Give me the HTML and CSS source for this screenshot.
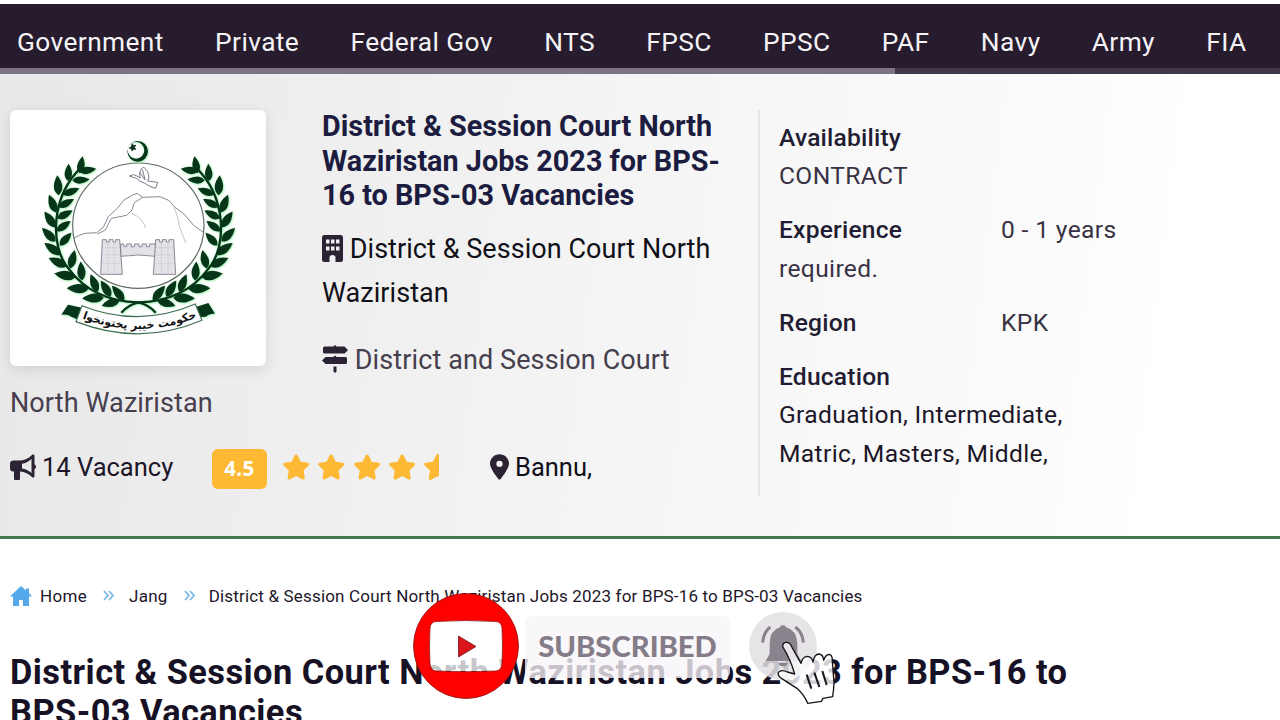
FILE: index.html
```html
<!DOCTYPE html>
<html lang="en">
<head>
    <meta charset="UTF-8">
    <meta name="viewport" content="width=device-width, initial-scale=1.0">
    <title>District &amp; Session Court North Waziristan Jobs 2023</title>
    <link rel="stylesheet" href="styles.css">
</head>
<body>
    <nav class="navbar">
        <div class="nav-links">
            <a>Government</a>
            <a>Private</a>
            <a>Federal Gov</a>
            <a>NTS</a>
            <a>FPSC</a>
            <a>PPSC</a>
            <a>PAF</a>
            <a>Navy</a>
            <a>Army</a>
            <a>FIA</a>
        </div>
        <div class="nav-scroll"><div class="nav-thumb"></div></div>
    </nav>

    <section class="hero">
        <div class="job">
            <div class="job-top">
                <div class="logo-card">
                    <svg viewBox="30 30 768 768">
                        <defs>
                            <path id="leaf" d="M-25 0Q-8 -22 27 0Q-6 22 -25 0Z"/>
                            <g id="branch">
                                <path d="M246 200C150 290 150 440 205 505C260 580 340 605 415 607Q448 615 467 638" fill="none" stroke="#07351a" stroke-width="7"/>
                                <use href="#leaf" transform="translate(243 195) rotate(-80)"/>
                                <use href="#leaf" transform="translate(205 218) rotate(-88)"/>
                                <use href="#leaf" transform="translate(174 257) rotate(-94) scale(1.15)"/>
                                <use href="#leaf" transform="translate(158 312) rotate(-112) scale(1.1)"/>
                                <use href="#leaf" transform="translate(150 359) rotate(-124) scale(1.1)"/>
                                <use href="#leaf" transform="translate(147 405) rotate(-135) scale(1.1)"/>
                                <use href="#leaf" transform="translate(158 447) rotate(-144) scale(1.15)"/>
                                <use href="#leaf" transform="translate(174 487) rotate(-155) scale(1.15)"/>
                                <use href="#leaf" transform="translate(196 526) rotate(-170) scale(1.25)"/>
                                <use href="#leaf" transform="translate(234 566) rotate(-178) scale(1.25)"/>
                                <use href="#leaf" transform="translate(280 594) rotate(178) scale(1.25)"/>
                                <use href="#leaf" transform="translate(333 609) rotate(162) scale(1.1)"/>
                                <use href="#leaf" transform="translate(262 211) rotate(-10)"/>
                                <use href="#leaf" transform="translate(242 240) rotate(-4)"/>
                                <use href="#leaf" transform="translate(213 275) rotate(-22)"/>
                                <use href="#leaf" transform="translate(198 310) rotate(-28)"/>
                                <use href="#leaf" transform="translate(194 344) rotate(-28)"/>
                                <use href="#leaf" transform="translate(190 379) rotate(-36)"/>
                                <use href="#leaf" transform="translate(196 418) rotate(-48)"/>
                                <use href="#leaf" transform="translate(217 479) rotate(-76) scale(1.1)"/>
                                <use href="#leaf" transform="translate(244 514) rotate(-94) scale(1.1)"/>
                                <use href="#leaf" transform="translate(283 550) rotate(-112) scale(1.1)"/>
                                <use href="#leaf" transform="translate(318 567) rotate(-122) scale(1.1)"/>
                                <use href="#leaf" transform="translate(355 580) rotate(-130) scale(1.1)"/>
                            </g>
                        </defs>
                        <g class="wreath">
                            <use href="#branch"/>
                            <use href="#branch" transform="translate(831 0) scale(-1 1)"/>
                        </g>
                        <ellipse cx="415" cy="377" rx="197" ry="188" fill="#fff" stroke="#5d6b63" stroke-width="3.5"/>
                        <!-- crescent and star -->
                        <path class="wreath" fill-rule="evenodd" d="M413 123A31 31 0 1 1 413 185A31 31 0 1 1 413 123ZM408 126A25 25 0 1 0 408 176A25 25 0 1 0 408 126Z"/>
                        <path fill="#123322" stroke="#123322" stroke-width="3" d="M397 131l3 6 7-1-4 6 4 6-7-1-4 6-1-7-7-2 6-3z"/>
                        <!-- dove -->
                        <path d="M388 228l12-4q10 2 20 10q-4-26 11-33q16 12 16 30l-4 12l30 4l-6 18q-18-4-34-16q-18-6-24-14zM420 218l15 22M427 208l8 30" fill="none" stroke="#665f70" stroke-width="2.5"/>
                        <!-- mountain -->
                        <g fill="none" stroke="#8d8794" stroke-width="3">
                            <path d="M221 415L240 405L255 400L290 398L310 382L325 350L352 325L372 300L398 285L411 280L428 292L480 290L508 302L525 322L552 342L580 375L610 397"/>
                            <path d="M292 402L316 390L334 355L380 346L396 330L403 308L428 292" />
                            <path d="M395 341Q426 350 437 384M522 322Q535 350 538 378L557 429" stroke="#bbb7c0" stroke-width="2.5"/>
                        </g>
                        <!-- fort -->
                        <g fill="#e4e2e7" stroke="#777281" stroke-width="2.5">
                            <path d="M362 432h10v8h8v-8h14v8h9v-8h14v8h9v-8h14v8h9v-8h18v37q-50-8-105 0z"/>
                            <path d="M307 419h12v7h8v-7h12v7h8v-7h12l8 104h-65z"/>
                            <path d="M467 419h12v7h8v-7h12v7h8v-7h14l6 104h-67z"/>
                            <path d="M306 443h54M305 465h58M304 490h61M466 443h57M463 465h61M462 490h63M324 430v90M343 430v90M484 430v90M504 430v90" stroke="#b4b1ba" stroke-width="1.5" stroke-dasharray="6 4"/>
                        </g>
                        <!-- ribbon -->
                        <g class="wreath">
                            <path d="M184 644L204 614L245 623L231 658L214 650Q202 641 184 644Z"/>
                            <path d="M645 641L625 609L588 621L600 651L617 650Q628 640 645 641Z"/>
                        </g>
                        <path d="M246 617Q415 685 586 612L606 661Q420 740 228 665Z" fill="#fff" stroke="#3d7050" stroke-width="3.5"/>
                        <path id="ribbonLine" d="M245 655Q420 720 592 652" fill="none"/>
                        <text class="ribbon-text" text-anchor="middle"><textPath href="#ribbonLine" startOffset="50%">حکومت خیبر پختونخوا</textPath></text>
                    </svg>
                </div>
                <div class="job-info">
                    <h2>District &amp; Session Court North Waziristan Jobs 2023 for BPS-16 to BPS-03 Vacancies</h2>
                    <p class="company">
                        <svg class="ico-building" viewBox="0 0 21 27"><path fill-rule="evenodd" d="M2.5 0H18.5Q21 0 21 2.5V24.5Q21 27 18.5 27H13.5V22.5Q13.5 20 10.5 20T7.5 22.5V27H2.5Q0 27 0 24.5V2.5Q0 0 2.5 0ZM4 4.5v4h3.5v-4zM9 4.5v4h3.5v-4zM14 4.5v4h3.5v-4zM4 11.5v4h3.5v-4zM9 11.5v4h3.5v-4zM14 11.5v4h3.5v-4z"/></svg>
                        District &amp; Session Court North Waziristan
                    </p>
                    <p class="department">
                        <svg class="ico-sign" viewBox="0 0 26 28"><path d="M11.5 1.5Q13 -1 14.5 1.5H22.5L26 5L22.5 8.5H2.5Q1 8.5 1 7V3Q1 1.5 2.5 1.5ZM11.5 12Q13 9 14.5 12H23.5Q25 12 25 13.5V17.500Q25 19 23.5 19H3.5L0 15.5L3.5 12ZM11.500 21.500h3V26.500Q13 29 11.500 26.500Z"/></svg>
                        District and Session Court
                    </p>
                </div>
            </div>
            <p class="department-rest">North Waziristan</p>
            <div class="job-meta">
                <span class="vacancy">
                    <svg class="ico-horn" viewBox="0 0 26 26"><path fill-rule="evenodd" d="M24.5 1.5V10.500Q26 11 26 12.800T24.500 15V22.500Q24 24 22.500 23.500Q17 18 10 17.500V25Q10 26 9 26H5Q4 26 4 25V17.500H3Q0 17 0 14.500V9.500Q0 7 3 6.500H9Q17 6.500 22.500 .5Q24 0 24.500 1.500ZM21.500 5Q17 9.200 12 9.700V14.500Q17 15 21.500 19Z"/></svg>
                    14 Vacancy
                </span>
                <span class="score">4.5</span>
                <span class="stars">
                    <svg viewBox="0 0 576 512"><path id="star" d="M316.900 18C311.600 7 300.400 0 288.100 0s-23.400 7-28.800 18L195 150.300 51.400 171.500c-12 1.800-22 10.200-25.700 21.700s-.7 24.200 7.900 32.700L137.800 329 113.200 474.700c-2 12 3 24.200 12.900 31.300s23 8 33.800 2.300l128.300-68.500 128.300 68.500c10.800 5.700 23.900 4.900 33.800-2.300s14.900-19.300 12.900-31.300L438.500 329 542.700 225.900c8.600-8.500 11.700-21.200 7.900-32.700s-13.700-19.900-25.700-21.700L381.200 150.300 316.900 18z"/></svg>
                    <svg viewBox="0 0 576 512"><use href="#star"/></svg>
                    <svg viewBox="0 0 576 512"><use href="#star"/></svg>
                    <svg viewBox="0 0 576 512"><use href="#star"/></svg>
                    <svg class="half" viewBox="0 0 320 512"><use href="#star"/></svg>
                </span>
                <span class="place">
                    <svg class="ico-pin" viewBox="0 0 384 512"><path d="M215.700 499.200C267 435 384 279.400 384 192C384 86 298 0 192 0S0 86 0 192c0 87.400 117 243 168.300 307.200c12.300 15.300 35.100 15.300 47.400 0zM192 128a64 64 0 1 1 0 128 64 64 0 1 1 0-128z"/></svg>
                    Bannu,
                </span>
            </div>
        </div>
        <aside class="facts">
            <p><b>Availability</b><br>CONTRACT</p>
            <p><b>Experience</b>0 - 1 years<br>required.</p>
            <p><b>Region</b>KPK</p>
            <p class="dark"><b>Education</b><br>Graduation, Intermediate,<br>Matric, Masters, Middle,</p>
        </aside>
    </section>

    <div class="breadcrumb">
        <svg class="ico-home" viewBox="0 0 22 20"><path d="M11 0L16 4.500V2.500H19V7L22 10.500H19V20H13V14H9V20H3V10.500H0Z"/></svg>
        <span>Home</span>
        <svg class="ico-chev" viewBox="0 0 11 11"><path d="M1 1l4 4.500-4 4.500M6 1l4 4.500-4 4.500"/></svg>
        <span>Jang</span>
        <svg class="ico-chev" viewBox="0 0 11 11"><path d="M1 1l4 4.500-4 4.500M6 1l4 4.500-4 4.500"/></svg>
        <span class="current">District &amp; Session Court North Waziristan Jobs 2023 for BPS-16 to BPS-03 Vacancies</span>
    </div>
    <h1>District &amp; Session Court North Waziristan Jobs 2023 for BPS-16 to BPS-03 Vacancies</h1>

    <!-- subscribe banner over the page -->
    <div class="subscribe">
        <svg class="yt" viewBox="0 0 106 106">
            <rect x="17" y="28" width="72" height="50" rx="7" fill="#fff" fill-opacity=".76"/>
            <path fill="#fe0000" stroke="#8d1512" stroke-width=".8" fill-rule="evenodd" d="M53 .5A52.500 52.500 0 1 1 53 105.500A52.500 52.500 0 1 1 53 .5ZM23 28.500Q53 26.500 83 28.500Q88.500 29 89 35Q90 53 89 71Q88.500 77 83 78Q53 79.500 23 78Q17.500 77 17 71Q16 53 17 35Q17.500 29 23 28.500Z"/>
            <path fill="#d9151b" stroke="#7d1418" stroke-width=".8" d="M45.500 43V64L63 53.500Z"/>
        </svg>
        <div class="sub-label">SUBSCRIBED</div>
        <svg class="bell" viewBox="360 90 330 300">
            <circle cx="489" cy="198" r="102" fill="#e2dfe3" fill-opacity=".86"/>
            <path fill="#8a838e" d="M480 142Q480 136 489 136T498 142Q530 150 532 190V222L544 243H437L449 222V190Q450 150 480 142ZM476 248H503Q501 259 489 259T476 248Z"/>
            <path d="M451 141Q430 157 428 188M526 141Q548 157 550 188" fill="none" stroke="#8a838e" stroke-width="9"/>
            <path fill="#fff" fill-opacity=".8" stroke="#16131a" stroke-width="4" stroke-linejoin="round" d="M488 200Q488 186 501 187Q511 188 516 202L543 250Q548 229 562 229Q576 230 579 246Q583 222 597 222Q610 224 611 241Q618 221 630 224Q638 228 637 245L642 308Q641 330 638 350L609 355L604 364L563 370Q552 344 531 325L489 298Q471 288 475 277Q484 267 502 276L524 282Q513 241 488 200Z"/>
            <path d="M560 284L574 326M583 278L598 321M607 273L620 315" fill="none" stroke="#16131a" stroke-width="6"/>
        </svg>
    </div>
</body>
</html>
```
FILE: styles.css
```css
* {
    margin: 0;
    padding: 0;
    box-sizing: border-box;
}

body {
    height: 720px;
    overflow: hidden;
    background: #fff;
    color: #1c1628;
    font-family: Roboto, "Liberation Sans", sans-serif;
    position: relative;
}

.navbar {
    margin-top: 4px;
    height: 70px;
    background: #261c2d;
    display: flex;
    flex-direction: column;
    overflow: hidden;
}

.nav-links {
    height: 64px;
    padding: 12px 0 0 17px;
    display: flex;
    align-items: center;
    gap: 51.3px;
    flex-shrink: 0;
    color: #f5f3f6;
    font-size: 26.3px;
    letter-spacing: 0.4px;
    white-space: nowrap;
}

.nav-scroll {
    height: 6px;
    background: #40384a;
}

.nav-thumb {
    width: 895px;
    height: 6px;
    background: #7b7480;
}

.hero {
    height: 465px;
    padding-top: 36px;
    display: flex;
    align-items: flex-start;
    background: linear-gradient(97deg, #e8e8e9 0%, #f0f0f0 32%, #f7f7f7 58%, #fbfbfb 80%, #fff 90%);
    border-bottom: 3px solid #427a4c;
}

.job {
    width: 758px;
    padding-left: 10px;
}

.job-top {
    display: flex;
    height: 271px;
}

.logo-card {
    width: 256px;
    height: 256px;
    margin-right: 56px;
    flex-shrink: 0;
    background: #fff;
    border-radius: 6px;
    box-shadow: 0 3px 14px rgba(50, 40, 80, 0.13);
}

.logo-card svg {
    display: block;
    width: 256px;
    height: 256px;
}

.wreath {
    fill: #07351a;
    filter: drop-shadow(2px 2px 3px #8cf0a0);
}

.ribbon-text {
    font: bold 33px "DejaVu Sans", sans-serif;
    fill: #111;
}

.job-info {
    width: 420px;
}

.job-info svg,
.job-meta svg {
    fill: #2b2233;
}

h2 {
    color: #1c1c40;
    font-size: 28.8px;
    line-height: 34.5px;
    font-weight: 700;
    margin-top: -1px;
}

.company {
    margin-top: 14px;
    color: #111018;
    font-size: 27px;
    line-height: 44px;
    letter-spacing: 0.05px;
}

.department {
    margin-top: 23px;
}

.department,
.department-rest {
    color: #46404e;
    font-size: 27px;
    line-height: 44px;
    letter-spacing: 0.1px;
}

.ico-building {
    width: 21px;
    height: 27px;
    vertical-align: -4px;
}

.ico-sign {
    width: 26px;
    height: 28px;
    vertical-align: -4px;
}

.job-meta {
    display: flex;
    align-items: center;
    height: 44px;
    margin-top: 20px;
    font-size: 25.5px;
}

.vacancy {
    display: flex;
    align-items: center;
    gap: 6px;
    width: 202px;
}

.ico-horn {
    width: 26px;
    height: 26px;
}

.score {
    width: 55px;
    height: 40px;
    margin-top: 4px;
    border-radius: 6px;
    background: #fdb933;
    color: #fff;
    font: bold 20.5px/39px "Open Sans", sans-serif;
    letter-spacing: 0.4px;
    text-align: center;
}

.job-meta .stars {
    display: flex;
    gap: 7px;
    margin-left: 15px;
    width: 208px;
}

.job-meta .stars svg {
    width: 28.3px;
    height: 26px;
    fill: #fdb933;
}

.job-meta .stars .half {
    width: 16.3px;
}

.place {
    display: flex;
    align-items: center;
    gap: 6px;
    color: #111018;
}

.ico-pin {
    width: 19px;
    height: 26px;
}

.facts {
    height: 386px;
    padding: 9px 0 0 19px;
    border-left: 2px solid #e6e6e9;
    color: #383244;
    font-size: 24.6px;
    line-height: 38.4px;
    letter-spacing: 0.35px;
}

.facts p {
    margin-bottom: 15.6px;
}

.facts b {
    display: inline-block;
    width: 222px;
    color: #231d33;
    font-weight: 500;
    letter-spacing: 0.2px;
}

.facts .dark {
    color: #1c1628;
}

.breadcrumb {
    display: flex;
    align-items: center;
    height: 24px;
    margin: 45px 0 0 10px;
    font-size: 17px;
    letter-spacing: 0.3px;
    white-space: nowrap;
}

.current {
    margin-left: -1px;
    letter-spacing: 0.17px;
}

.ico-home {
    width: 22px;
    height: 20px;
    margin-right: 8px;
    fill: #55a8ea;
}

.ico-chev {
    width: 11px;
    height: 11px;
    margin: 0 15px 2px 16px;
    fill: none;
    stroke: #79b9e8;
    stroke-width: 1.8;
}

h1 {
    width: 1100px;
    margin: 44px 0 0 10px;
    color: #171126;
    font-size: 34.4px;
    line-height: 40px;
    font-weight: 700;
    letter-spacing: 0.45px;
}

.subscribe {
    position: absolute;
    left: 413px;
    top: 593px;
    display: flex;
}

.yt {
    width: 106px;
    height: 106px;
}

.sub-label {
    width: 205px;
    height: 62px;
    margin: 23px 0 0 6px;
    border-radius: 6px;
    background: rgba(248, 245, 248, 0.78);
    color: #847c88;
    font: 900 29.2px/60px Lato, sans-serif;
    text-align: center;
}

.bell {
    width: 110px;
    height: 100px;
    margin: 17px 0 0 10px;
}
```
